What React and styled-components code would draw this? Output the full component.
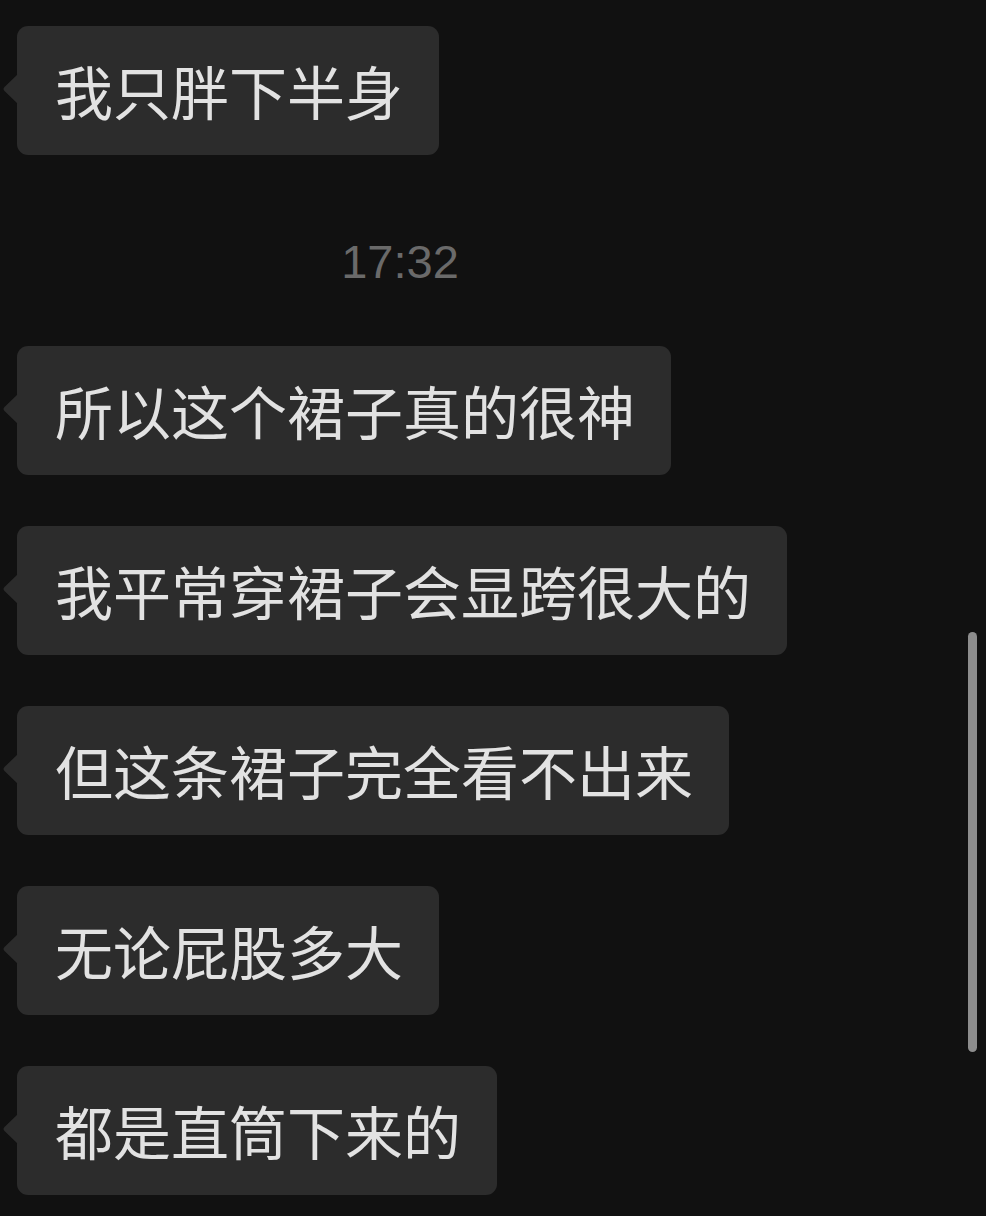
import React from "react";
import styled, { createGlobalStyle } from "styled-components";

const Global = createGlobalStyle`
  html, body { margin: 0; padding: 0; background: #111111; }
  body { font-family: "Noto Sans CJK SC", "Noto Sans", sans-serif; }
`;

const Screen = styled.div`
  position: relative;
  width: 986px;
  height: 1216px;
  background: #111111;
  overflow: hidden;
  display: flex;
  flex-direction: column;
  align-items: flex-start;
  padding-top: 26px;
  box-sizing: border-box;
`;

const Row = styled.div`
  display: flex;
  padding-left: 17px;
  margin-bottom: ${(p) => p.$gap}px;
`;

const Bubble = styled.div`
  position: relative;
  background: #2c2c2c;
  color: #e2e2e2;
  font-family: "Noto Sans CJK SC", sans-serif;
  font-size: 58px;
  line-height: 58px;
  padding: 35px 36px 36px 38px;
  border-radius: 11px;
  white-space: nowrap;
`;

const Tail = styled.svg`
  position: absolute;
  left: -16px;
  top: 48px;
  width: 17px;
  height: 30px;
`;

const Time = styled.div`
  width: 800px;
  text-align: center;
  font-family: "Liberation Sans", Arial, sans-serif;
  font-size: 47px;
  line-height: 54px;
  color: #6a6a6a;
  margin: 80px 0 57px 0;
`;

const ScrollThumb = styled.div`
  position: absolute;
  left: 968px;
  top: 632px;
  width: 9px;
  height: 420px;
  border-radius: 5px;
  background: #8d8d8d;
`;

const Msg = ({ text, gap }) => (
  <Row $gap={gap}>
    <Bubble>
      <Tail viewBox="0 0 17 30">
        <path d="M17 0 L17 30 L3.5 17 Q1.5 15 3.5 13 Z" fill="#2c2c2c" />
      </Tail>
      {text}
    </Bubble>
  </Row>
);

export default function App() {
  return (
    <>
      <Global />
      <Screen>
        <Msg text="我只胖下半身" gap={0} />
        <Time>17:32</Time>
        <Msg text="所以这个裙子真的很神" gap={51} />
        <Msg text="我平常穿裙子会显跨很大的" gap={51} />
        <Msg text="但这条裙子完全看不出来" gap={51} />
        <Msg text="无论屁股多大" gap={51} />
        <Msg text="都是直筒下来的" gap={0} />
        <ScrollThumb />
      </Screen>
    </>
  );
}
